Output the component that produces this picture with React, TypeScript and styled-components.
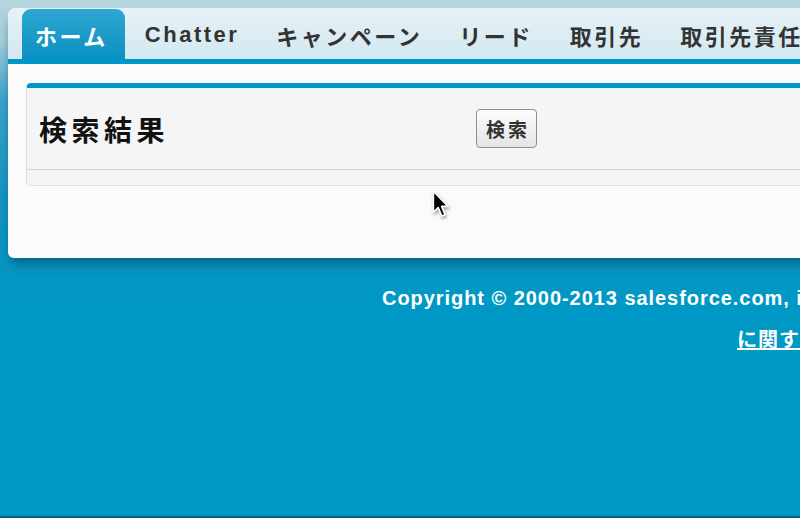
import React from "react";
import styled, { createGlobalStyle, css } from "styled-components";

const GlobalStyle = createGlobalStyle`
  html, body { margin: 0; padding: 0; overflow: hidden; }
  body { width: 800px; height: 518px; }
`;

const jp = `"Liberation Sans", "Noto Sans CJK JP", sans-serif`;

const Page = styled.div`
  width: 1440px;
  height: 518px;
  box-sizing: border-box;
  padding-top: 8px;
  border-bottom: 2px solid #05607e;
  background: linear-gradient(
    to bottom,
    #b6d4de 0px,
    #a9cfdc 40px,
    #3aa3ca 100px,
    #1495c2 200px,
    #0098c4 300px
  );
  font-family: ${jp};
`;

const Card = styled.div`
  margin-left: 8px;
  width: 1424px;
  border-radius: 8px 8px 6px 6px;
  background: #fbfbfb;
  box-shadow: 0 9px 12px -3px rgba(0, 70, 105, 0.65);
  overflow: hidden;
`;

const TabBar = styled.div`
  display: flex;
  align-items: flex-end;
  height: 56px;
  box-sizing: border-box;
  padding: 1px 0 0 14px;
  gap: 7px;
  background: linear-gradient(to bottom, #e7f2f6, #d3e8f0);
  border-bottom: 5px solid #0096c6;
`;

const Tab = styled.div<{ $active?: boolean }>`
  display: flex;
  align-items: center;
  height: 50px;
  padding: 1px 17px 0 13px;
  box-sizing: border-box;
  font-size: 22px;
  font-weight: bold;
  letter-spacing: 2.5px;
  white-space: nowrap;
  color: #333;
  border-radius: 9px 9px 0 0;
  ${(p) =>
    p.$active &&
    css`
      color: #fff;
      background: linear-gradient(to bottom, #2ea6d1, #0a91c1);
    `}
`;

const Body = styled.div`
  position: relative;
  padding: 19px 18px 72px 18px;
`;

const Panel = styled.div`
  border-top: 5px solid #0096c6;
  border-left: 1px solid #dcdcdc;
  border-bottom: 1px solid #e2e2e2;
  border-radius: 5px;
  background: #f4f5f6;
`;

const PanelHeader = styled.div`
  display: flex;
  align-items: center;
  height: 81px;
  padding-left: 12px;
  border-bottom: 1px solid #d6d6d6;
`;

const TitleCell = styled.div`
  width: 437px;
`;

const Title = styled.h2`
  margin: 0;
  font-size: 28px;
  font-weight: bold;
  letter-spacing: 4.5px;
  color: #111;
  font-family: ${jp};
`;

const SearchButton = styled.button`
  width: 61px;
  height: 39px;
  padding: 0 0 0 3px;
  border: 1px solid #8f8f8f;
  border-radius: 4px;
  background: linear-gradient(to bottom, #fdfdfd, #e4e4e4);
  font-family: ${jp};
  font-size: 19px;
  font-weight: bold;
  letter-spacing: 3px;
  color: #333;
`;

const PanelFoot = styled.div`
  height: 15px;
`;

const Cursor = styled.svg`
  position: absolute;
  left: 424px;
  top: 126px;
  width: 18px;
  height: 28px;
  filter: drop-shadow(1px 2px 1.5px rgba(0, 0, 0, 0.35));
`;

const Footer = styled.div`
  padding-top: 29px;
  color: #fff;
  font-size: 20px;
  font-weight: bold;
  letter-spacing: 0.95px;
  line-height: 22px;
  white-space: nowrap;
`;

const Copyright = styled.div`
  padding-left: 382px;
`;

const Links = styled.div`
  margin-top: 20px;
  padding-left: 737px;
`;

const FootLink = styled.a`
  color: #fff;
  text-decoration: underline;
`;

const tabs = [
  "ホーム",
  "Chatter",
  "キャンペーン",
  "リード",
  "取引先",
  "取引先責任者",
  "商談",
  "売上予測",
  "ケース",
];

export default function App() {
  return (
    <>
      <GlobalStyle />
      <Page>
        <Card>
          <TabBar>
            {tabs.map((t, i) => (
              <Tab key={t} $active={i === 0}>
                {t}
              </Tab>
            ))}
          </TabBar>
          <Body>
            <Panel>
              <PanelHeader>
                <TitleCell>
                  <Title>検索結果</Title>
                </TitleCell>
                <SearchButton>検索</SearchButton>
              </PanelHeader>
              <PanelFoot />
            </Panel>
            <Cursor viewBox="0 0 14 22">
              <path
                d="M1 1 L1 17.5 L4.8 13.8 L7.6 20.5 L10.2 19.4 L7.5 12.9 L12.6 12.9 Z"
                fill="#000"
                stroke="#fff"
                strokeWidth="1.3"
                strokeLinejoin="round"
              />
            </Cursor>
          </Body>
        </Card>
        <Footer>
          <Copyright>
            Copyright © 2000-2013 salesforce.com, inc. All rights reserved.
          </Copyright>
          <Links>
            <FootLink>に関する声明</FootLink>
          </Links>
        </Footer>
      </Page>
    </>
  );
}
